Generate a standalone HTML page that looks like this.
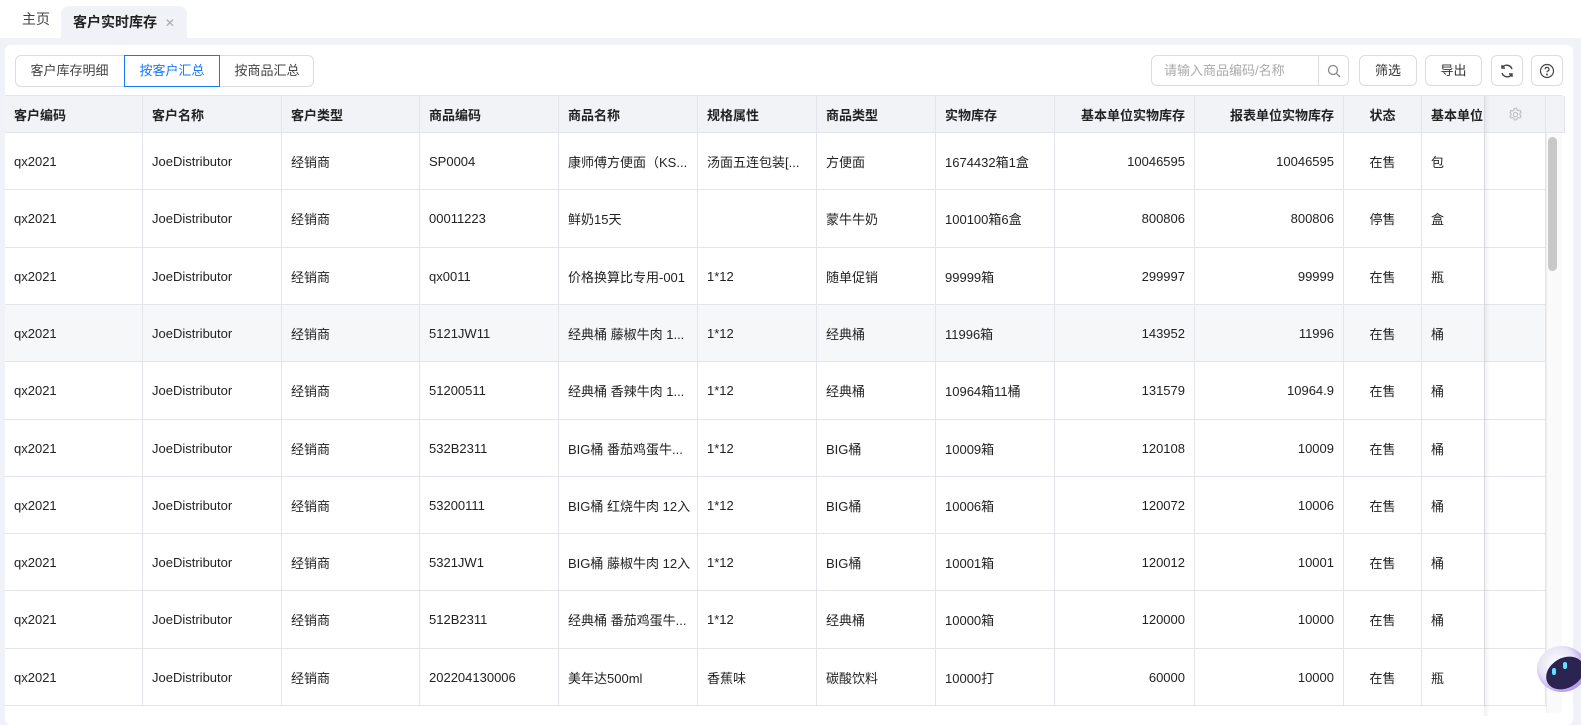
<!DOCTYPE html>
<html><head><meta charset="utf-8"><style>
*{box-sizing:border-box;margin:0;padding:0}
body{width:1581px;height:710px;overflow:hidden;background:#f0f2f7;font-family:"Liberation Sans","Noto Sans CJK SC",sans-serif;font-size:13px;color:#222;position:relative}
.top{position:absolute;left:0;top:0;width:1581px;height:38px;background:#fff}
.tab{position:absolute;top:0;height:38px;line-height:38px;font-size:14px}
.panel{position:absolute;left:5px;top:45px;width:1568px;height:680px;background:#fff;border-radius:6px}
.btn{position:absolute;height:31px;line-height:29px;border:1px solid #d9dce3;border-radius:6px;text-align:center;font-size:13px;color:#333;background:#fff}
.c{position:absolute;overflow:hidden;white-space:nowrap;border-right:1px solid #e3e5ea;border-bottom:1px solid #e3e5ea;padding:0 9px;display:flex;align-items:center}
.h{background:#f2f3f6;font-weight:bold;color:#222}
.r{justify-content:flex-end}.m{justify-content:center}
</style></head><body>
<div class="top"></div>
<div class="tab" style="left:22px;color:#444">主页</div>
<div class="tab" style="left:61px;width:126px;top:6px;height:32px;line-height:32px;background:#f0f2f7;border-radius:8px 8px 0 0;padding-left:12px;font-weight:bold">客户实时库存 <span style="color:#aaa;font-weight:normal;font-size:12px;margin-left:4px">✕</span></div>
<div class="panel"></div>
<div style="position:absolute;left:15px;top:55px;width:299px;height:32px;border:1px solid #d9dce3;border-radius:6px"></div>
<div style="position:absolute;left:15px;top:55px;width:109px;height:32px;line-height:32px;text-align:center;color:#444">客户库存明细</div>
<div style="position:absolute;left:124px;top:55px;width:96px;height:32px;line-height:30px;text-align:center;color:#1677ff;border:1px solid #1677ff">按客户汇总</div>
<div style="position:absolute;left:220px;top:55px;width:94px;height:32px;line-height:32px;text-align:center;color:#444">按商品汇总</div>
<div class="btn" style="left:1151px;top:55px;width:198px;text-align:left;padding-left:12px;color:#aaa">请输入商品编码/名称<span style="position:absolute;left:166px;top:-1px;width:1px;height:31px;background:#d9dce3"></span><svg style="position:absolute;left:175px;top:8px" width="14" height="14" viewBox="0 0 14 14" fill="none" stroke="#888" stroke-width="1.3"><circle cx="6" cy="6" r="4.5"/><path d="M9.3 9.3L13 13"/></svg></div>
<div class="btn" style="left:1359px;top:55px;width:58px">筛选</div>
<div class="btn" style="left:1425px;top:55px;width:57px">导出</div>
<div class="btn" style="left:1491px;top:55px;width:32px"><svg width="16" height="16" viewBox="0 0 16 16" style="margin-top:7px" fill="none" stroke="#444" stroke-width="1.4"><path d="M13 6A5.5 5.5 0 0 0 3 5M3 10a5.5 5.5 0 0 0 10 1"/><path d="M3 2v3h3M13 14v-3h-3"/></svg></div>
<div class="btn" style="left:1531px;top:55px;width:32px"><svg width="16" height="16" viewBox="0 0 16 16" style="margin-top:7px" fill="none" stroke="#444" stroke-width="1.2"><circle cx="8" cy="8" r="6.5"/><path d="M6.2 6.3a1.9 1.9 0 1 1 2.5 1.8c-.5.2-.7.6-.7 1.2"/><circle cx="8" cy="11.5" r=".4" fill="#444"/></svg></div>
<div id="t"></div>
<script>
var xs=[5,143,282,420,559,698,817,936,1055,1195,1344,1422,1485,1546,1562];
var al=['','','','','','','','','r','r','m','',''];
var H=['客户编码','客户名称','客户类型','商品编码','商品名称','规格属性','商品类型','实物库存','基本单位实物库存','报表单位实物库存','状态','基本单位',''];
var D=[
['SP0004','康师傅方便面（KS...','汤面五连包装[...','方便面','1674432箱1盒','10046595','10046595','在售','包'],
['00011223','鲜奶15天','','蒙牛牛奶','100100箱6盒','800806','800806','停售','盒'],
['qx0011','价格换算比专用-001','1*12','随单促销','99999箱','299997','99999','在售','瓶'],
['5121JW11','经典桶 藤椒牛肉 1...','1*12','经典桶','11996箱','143952','11996','在售','桶'],
['51200511','经典桶 香辣牛肉 1...','1*12','经典桶','10964箱11桶','131579','10964.9','在售','桶'],
['532B2311','BIG桶 番茄鸡蛋牛...','1*12','BIG桶','10009箱','120108','10009','在售','桶'],
['53200111','BIG桶 红烧牛肉 12入','1*12','BIG桶','10006箱','120072','10006','在售','桶'],
['5321JW1','BIG桶 藤椒牛肉 12入','1*12','BIG桶','10001箱','120012','10001','在售','桶'],
['512B2311','经典桶 番茄鸡蛋牛...','1*12','经典桶','10000箱','120000','10000','在售','桶'],
['202204130006','美年达500ml','香蕉味','碳酸饮料','10000打','60000','10000','在售','瓶']];
var s='';
function cell(i,y,h,txt,cls,bg){s+='<div class="c '+cls+' '+(al[i]||'')+'" style="left:'+xs[i]+'px;top:'+y+'px;width:'+(xs[i+1]-xs[i])+'px;height:'+h+'px;'+(bg?'background:'+bg:'')+'">'+txt+'</div>';}
s+='<div style="position:absolute;left:5px;top:95px;width:1557px;height:1px;background:#e3e5ea"></div>';
for(var i=0;i<13;i++)cell(i,96,37,H[i],'h');
s+='<div class="c h" style="left:1546px;top:96px;width:16px;height:37px"></div>';
s+='<svg style="position:absolute;left:1508px;top:107px" width="15" height="15" viewBox="0 0 16 16" fill="none" stroke="#bbb" stroke-width="1.1"><circle cx="8" cy="8" r="2.3"/><path d="M6.7 1.5h2.6l.4 1.8 1.3.7 1.7-.6 1.3 2.2-1.3 1.3v1.4l1.3 1.3-1.3 2.2-1.7-.6-1.3.7-.4 1.8H6.7l-.4-1.8-1.3-.7-1.7.6L2 10.2l1.3-1.3V7.1L2 5.8l1.3-2.2 1.7.6 1.3-.7z"/></svg>';
for(var r=0;r<10;r++){var y=133+Math.round(r*57.3),h=Math.round((r+1)*57.3)-Math.round(r*57.3);var bg=r==3?'#f6f7f9':'#fff';
var row=['qx2021','JoeDistributor','经销商'].concat(D[r]).concat(['']);
for(var i=0;i<13;i++)cell(i,y,h,row[i],'',bg);}
s+='<div style="position:absolute;left:1484px;top:96px;width:6px;height:620px;background:linear-gradient(90deg,rgba(0,0,0,.06),rgba(0,0,0,0))"></div>';
s+='<div style="position:absolute;left:1546px;top:133px;width:16px;height:580px;background:#fafafa;border-left:1px solid #eee"></div>';
s+='<div style="position:absolute;left:1548px;top:137px;width:9px;height:134px;background:#c8c8c8;border-radius:5px"></div>';
document.getElementById('t').innerHTML=s;
</script>
<div style="position:absolute;left:1537px;top:646px;width:50px;height:46px;border-radius:50%;background:radial-gradient(circle at 40% 40%,#fff 0,#e7e3f6 45%,#b59cf0 70%,#6a8cff 100%)"></div>
<div style="position:absolute;left:1545px;top:658px;width:40px;height:30px;border-radius:50%;background:#2b2350;transform:rotate(-30deg)"></div>
<div style="position:absolute;left:1552px;top:668px;width:4px;height:7px;border-radius:2px;background:#5fe0ff"></div>
<div style="position:absolute;left:1563px;top:662px;width:4px;height:7px;border-radius:2px;background:#5fe0ff"></div>
</body></html>
